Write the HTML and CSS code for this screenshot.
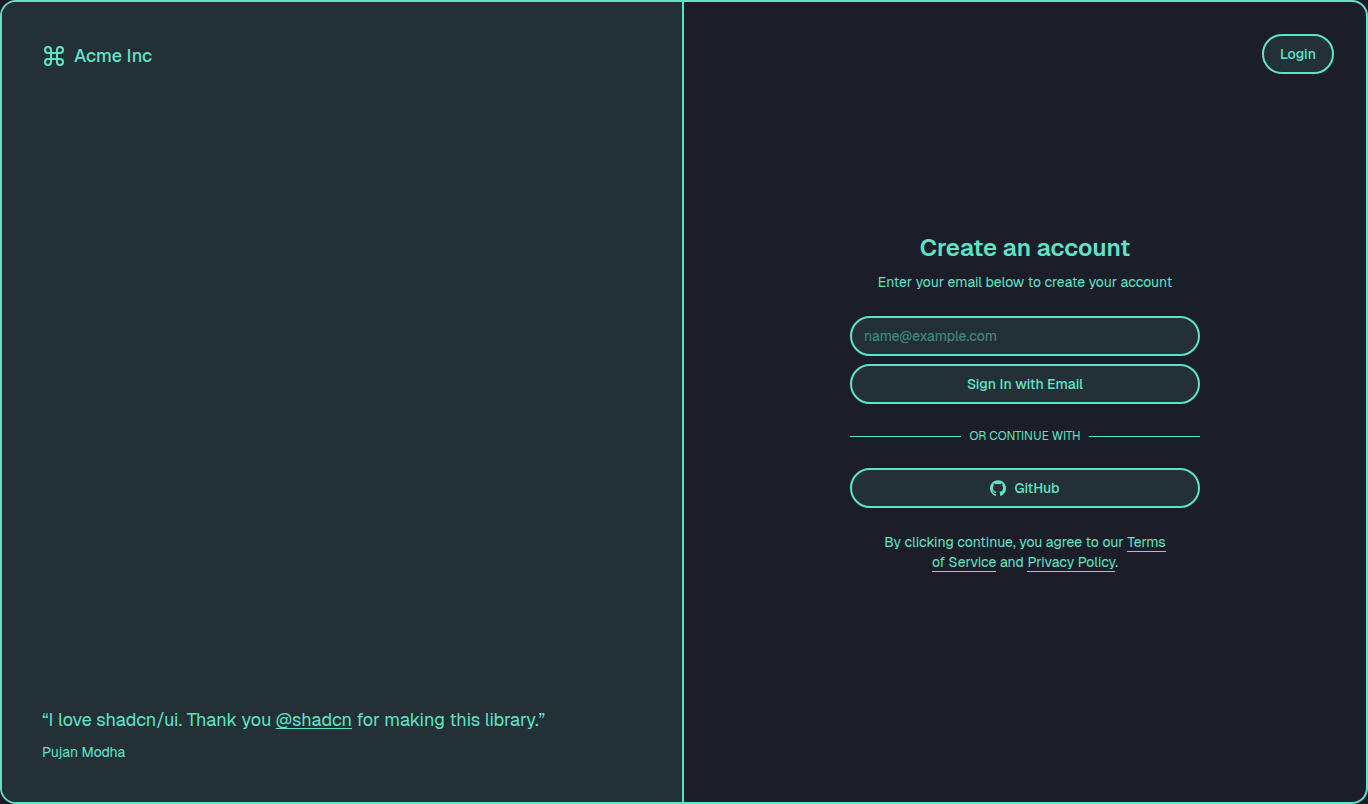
FILE: index.html
```
<!DOCTYPE html>
<html lang="en">
<head>
<meta charset="utf-8">
<meta name="viewport" content="width=device-width, initial-scale=1">
<title>Create an account</title>
<link rel="stylesheet" href="styles.css">
</head>
<body>
<div class="frame">
  <aside class="brand-panel">
    <div class="brand">
      <svg class="brand-icon" viewBox="0 0 24 24" fill="none" stroke="currentColor" stroke-width="2" stroke-linecap="round" stroke-linejoin="round" aria-hidden="true"><path d="M15 6v12a3 3 0 1 0 3-3H6a3 3 0 1 0 3 3V6a3 3 0 1 0-3 3h12a3 3 0 1 0-3-3"/></svg>
      <span>Acme Inc</span>
    </div>
    <blockquote class="quote">
      <p class="quote-text">“I love shadcn/ui. Thank you <a class="quote-link" href="#">@shadcn</a> for making this library.”</p>
      <footer class="quote-author">Pujan Modha</footer>
    </blockquote>
  </aside>
  <main class="main-panel">
    <header class="top-bar">
      <button class="button" type="button">Login</button>
    </header>
    <section class="signup">
      <div class="intro">
        <h1 class="title">Create an account</h1>
        <p class="subtitle">Enter your email below to create your account</p>
      </div>
      <form class="email-form">
        <input class="field" type="email" placeholder="name@example.com" aria-label="Email">
        <button class="button" type="button">Sign In with Email</button>
      </form>
      <div class="divider"><span>OR CONTINUE WITH</span></div>
      <button class="button" type="button">
        <svg class="github-icon" viewBox="0 0 438.549 438.549" fill="currentColor" aria-hidden="true"><path d="M409.132 114.573c-19.608-33.596-46.205-60.194-79.798-79.8-33.598-19.607-70.277-29.408-110.063-29.408-39.781 0-76.472 9.804-110.063 29.408-33.596 19.605-60.192 46.204-79.8 79.8C9.803 148.168 0 184.854 0 224.63c0 47.78 13.94 90.745 41.827 128.906 27.884 38.164 63.906 64.572 108.063 79.227 5.14.954 8.945.283 11.419-1.996 2.475-2.282 3.711-5.14 3.711-8.562 0-.571-.049-5.708-.144-15.417a2549.81 2549.81 0 01-.144-25.406l-6.567 1.136c-4.187.767-9.469 1.092-15.846 1-6.374-.089-12.991-.757-19.842-1.999-6.854-1.231-13.229-4.086-19.13-8.559-5.898-4.473-10.085-10.328-12.56-17.556l-2.855-6.57c-1.903-4.374-4.899-9.233-8.992-14.559-4.093-5.331-8.232-8.945-12.419-10.848l-1.999-1.431c-1.332-.951-2.568-2.098-3.711-3.429-1.142-1.331-1.997-2.663-2.568-3.997-.572-1.335-.098-2.43 1.427-3.289s4.281-1.276 8.28-1.276l5.708.853c3.807.763 8.516 3.042 14.133 6.851 5.614 3.806 10.229 8.754 13.846 14.842 4.38 7.806 9.657 13.754 15.846 17.847 6.184 4.093 12.419 6.136 18.699 6.136 6.28 0 11.704-.476 16.274-1.423 4.565-.952 8.848-2.383 12.847-4.285 1.713-12.758 6.377-22.559 13.988-29.41-10.848-1.14-20.601-2.857-29.264-5.14-8.658-2.286-17.605-5.996-26.835-11.14-9.235-5.137-16.896-11.516-22.985-19.126-6.09-7.614-11.088-17.61-14.987-29.979-3.901-12.374-5.852-26.648-5.852-42.826 0-23.035 7.52-42.637 22.557-58.817-7.044-17.318-6.379-36.732 1.997-58.24 5.52-1.715 13.706-.428 24.554 3.853 10.85 4.283 18.794 7.952 23.84 10.994 5.046 3.041 9.089 5.618 12.135 7.708 17.705-4.947 35.976-7.421 54.818-7.421s37.117 2.474 54.823 7.421l10.849-6.849c7.419-4.57 16.18-8.758 26.262-12.565 10.088-3.805 17.802-4.853 23.134-3.138 8.562 21.509 9.325 40.922 2.279 58.24 15.036 16.18 22.559 35.787 22.559 58.817 0 16.178-1.958 30.497-5.853 42.966-3.9 12.471-8.941 22.457-15.125 29.979-6.191 7.521-13.901 13.85-23.131 18.986-9.232 5.14-18.182 8.85-26.84 11.136-8.662 2.286-18.415 4.004-29.263 5.146 9.894 8.562 14.842 22.077 14.842 40.539v60.237c0 3.422 1.19 6.279 3.572 8.562 2.379 2.279 6.136 2.95 11.276 1.995 44.163-14.653 80.185-41.062 108.068-79.226 27.88-38.161 41.825-81.126 41.825-128.906-.01-39.771-9.818-76.454-29.414-110.049z"/></svg>
        GitHub
      </button>
      <p class="legal">By clicking continue, you agree to our <a href="#">Terms<br>of Service</a> and <a href="#">Privacy Policy</a>.</p>
    </section>
  </main>
</div>
</body>
</html>
```
FILE: styles.css
```
:root {
  --line: #5de4c7;
  --surface: #233137;
  --base: #1b1e28;
}

* {
  box-sizing: border-box;
}

body {
  margin: 0;
  background: #1b1b27;
  color: var(--line);
  font-family: "Geist", Inter, "Liberation Sans", sans-serif;
  font-size: 14px;
  line-height: 20px;
}

h1, p, blockquote {
  margin: 0;
}

a {
  color: inherit;
}

.frame {
  display: grid;
  grid-template-columns: 1fr 1fr;
  min-height: 100vh;
  overflow: hidden;
  background: var(--base);
  border: 2px solid var(--line);
  border-radius: 16px;
}

.brand-panel {
  display: flex;
  flex-direction: column;
  justify-content: space-between;
  padding: 40px;
  background: var(--surface);
  border-right: 2px solid var(--line);
}

.brand {
  display: flex;
  align-items: center;
  gap: 8px;
  font-size: 18px;
  line-height: 28px;
  font-weight: 500;
}

.brand-icon {
  width: 24px;
  height: 24px;
}

.quote {
  display: grid;
  gap: 8px;
}

.quote-text {
  font-size: 18px;
  line-height: 28px;
}

.quote-link {
  text-decoration: underline;
  text-decoration-thickness: 1px;
  text-underline-offset: 2px;
}

.main-panel {
  display: grid;
  grid-template-rows: 1fr auto 1fr;
  padding: 32px;
}

.top-bar {
  display: flex;
  justify-content: flex-end;
  align-items: flex-start;
}

.signup {
  display: grid;
  gap: 24px;
  width: 100%;
  max-width: 350px;
  margin: 0 auto;
}

.intro {
  display: grid;
  gap: 8px;
  text-align: center;
}

.title {
  font-size: 24px;
  line-height: 32px;
  font-weight: 600;
}

.email-form {
  display: grid;
  gap: 8px;
}

.button,
.field {
  height: 40px;
  border: 2px solid var(--line);
  border-radius: 20px;
  background: var(--surface);
  color: inherit;
  font: inherit;
}

.button {
  display: flex;
  align-items: center;
  justify-content: center;
  gap: 8px;
  padding: 0 16px;
  font-weight: 500;
  cursor: pointer;
}

.field {
  width: 100%;
  padding: 0 12px;
}

.field::placeholder {
  color: var(--line);
  opacity: 0.5;
}

.divider {
  display: flex;
  align-items: center;
  gap: 8px;
  font-size: 12px;
  line-height: 16px;
}

.divider::before,
.divider::after {
  content: "";
  flex: 1;
  height: 1px;
  background: var(--line);
}

.github-icon {
  width: 16px;
  height: 16px;
}

.legal {
  text-align: center;
}

.legal a {
  text-decoration: none;
  border-bottom: 1px solid var(--line);
}
```
